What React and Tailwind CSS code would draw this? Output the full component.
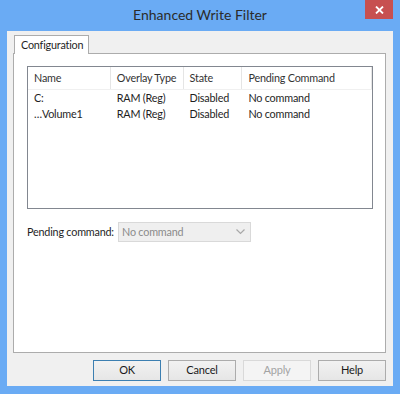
import React from "react";

const font = { fontFamily: 'Lato, "Noto Sans", sans-serif' };

function Button({ children, primary, disabled }) {
  return (
    <div
      className={
        "w-[68px] h-[21px] flex items-center justify-center text-[11px] border whitespace-nowrap " +
        (primary
          ? "border-[#3c7fb1] bg-gradient-to-b from-[#f2f2f2] to-[#e6e6e6] text-[#1a1a1a]"
          : disabled
          ? "border-[#d9d9d9] bg-[#f4f4f4] text-[#a3a3a3]"
          : "border-[#acacac] bg-gradient-to-b from-[#f2f2f2] to-[#e6e6e6] text-[#1a1a1a]")
      }
    >
      {children}
    </div>
  );
}

export default function App() {
  const rows = [
    ["C:", "RAM (Reg)", "Disabled", "No command"],
    ["…Volume1", "RAM (Reg)", "Disabled", "No command"],
  ];
  const cols = ["w-[83px]", "w-[73px]", "w-[59px]", "w-[130px]"];
  return (
    <div className="w-[400px] h-[394px] bg-[#6aabf4] flex flex-col" style={font}>
      {/* title bar */}
      <div className="h-[31px] grid grid-cols-[1fr_auto_1fr] shrink-0">
        <div />
        <div className="text-[14px] text-[#2b2b2b] pt-[5px] leading-[20px] whitespace-nowrap">Enhanced Write Filter</div>
        <div className="flex justify-end pr-[7px]">
          <div className="w-[28px] h-[19px] bg-[#c75050] flex items-center justify-center">
            <svg width="9" height="8" viewBox="0 0 9 8">
              <path d="M1 0.5 L8 7.5 M8 0.5 L1 7.5" stroke="#fff" strokeWidth="1.8" />
            </svg>
          </div>
        </div>
      </div>
      {/* client */}
      <div className="mx-[7px] h-[355px] bg-[#f0f0f0] flex flex-col pl-[6px] pr-[7px] pt-[4px] text-[10.8px] tracking-[-0.2px] text-[#1e1e1e] whitespace-nowrap">
        {/* tab strip */}
        <div className="flex h-[18px] pl-[1px]">
          <div className="w-[75px] h-[19px] bg-white border border-b-0 border-[#acacac] flex items-center pl-[6px] relative z-10 leading-none">
            Configuration
          </div>
        </div>
        {/* tab panel */}
        <div className="w-[373px] h-[300px] bg-white border border-[#acacac] pt-[12px] pl-[13px]">
          {/* list box */}
          <div className="w-[346px] h-[143px] border border-[#828790] bg-white">
            <div className="flex h-[23px] border-b border-[#f0f0f0]">
              {["Name", "Overlay Type", "State", "Pending Command"].map((h, i) => (
                <div
                  key={h}
                  className={cols[i] + " h-full flex items-center pl-[6px] border-r border-[#e5e5e5] text-[#333]"}
                >
                  {h}
                </div>
              ))}
            </div>
            {rows.map((r, ri) => (
              <div key={ri} className="flex h-[16px] items-center">
                {r.map((c, i) => (
                  <div key={i} className={cols[i] + " pl-[6px] leading-[16px]"}>
                    {c}
                  </div>
                ))}
              </div>
            ))}
          </div>
          {/* pending command */}
          <div className="flex items-center mt-[13px]">
            <div className="w-[91px] text-[#1e1e1e]">Pending command:</div>
            <div className="w-[133px] h-[20px] bg-[#efefef] border border-[#d9d9d9] flex items-center justify-between pl-[3px] pr-[5px] text-[#8a8a8a]">
              <span>No command</span>
              <svg width="9" height="6" viewBox="0 0 9 6">
                <path d="M0.5 0.5 L4.5 4.5 L8.5 0.5" stroke="#a8a8a8" strokeWidth="1.2" fill="none" />
              </svg>
            </div>
          </div>
        </div>
        {/* buttons */}
        <div className="flex justify-end gap-[7px] mt-[7px]">
          <Button primary>OK</Button>
          <Button>Cancel</Button>
          <Button disabled>Apply</Button>
          <Button>Help</Button>
        </div>
      </div>
    </div>
  );
}
